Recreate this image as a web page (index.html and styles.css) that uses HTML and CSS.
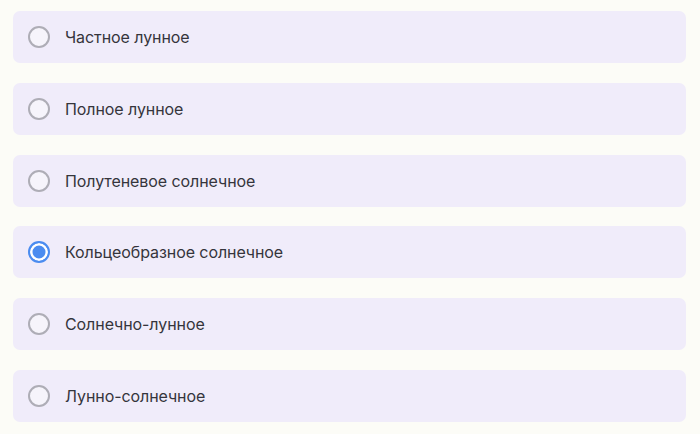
FILE: index.html
```html
<!DOCTYPE html>
<html lang="ru">
<head>
<meta charset="utf-8">
<link rel="stylesheet" href="styles.css">
</head>
<body>
<div class="options">
  <label class="option"><span class="radio"></span><span class="label">Частное лунное</span></label>
  <label class="option"><span class="radio"></span><span class="label">Полное лунное</span></label>
  <label class="option"><span class="radio"></span><span class="label">Полутеневое солнечное</span></label>
  <label class="option selected"><span class="radio"></span><span class="label">Кольцеобразное солнечное</span></label>
  <label class="option"><span class="radio"></span><span class="label">Солнечно-лунное</span></label>
  <label class="option"><span class="radio"></span><span class="label">Лунно-солнечное</span></label>
</div>
</body>
</html>
```
FILE: styles.css
```css
html, body {
  margin: 0;
  padding: 0;
  background: #fcfcf7;
}
body {
  font-family: Inter, "Noto Sans", sans-serif;
}
.options {
  display: flex;
  flex-direction: column;
  gap: 19.8px;
  padding: 11px 14px 0 13px;
}
.option {
  display: flex;
  align-items: center;
  gap: 15px;
  height: 52px;
  padding-left: 15px;
  background: #f0ecfa;
  border-radius: 7px;
  box-sizing: border-box;
}
.radio {
  width: 22px;
  height: 22px;
  box-sizing: border-box;
  border: 2px solid #aeadb6;
  border-radius: 50%;
  background: #f6f4fb;
  flex: none;
}
.selected .radio {
  border-color: #4b8cf0;
  background: #4b8cf0;
  box-shadow: inset 0 0 0 2.5px #ffffff;
}
.label {
  font-size: 16px;
  color: #35353c;
  letter-spacing: -0.08px;
}
```
